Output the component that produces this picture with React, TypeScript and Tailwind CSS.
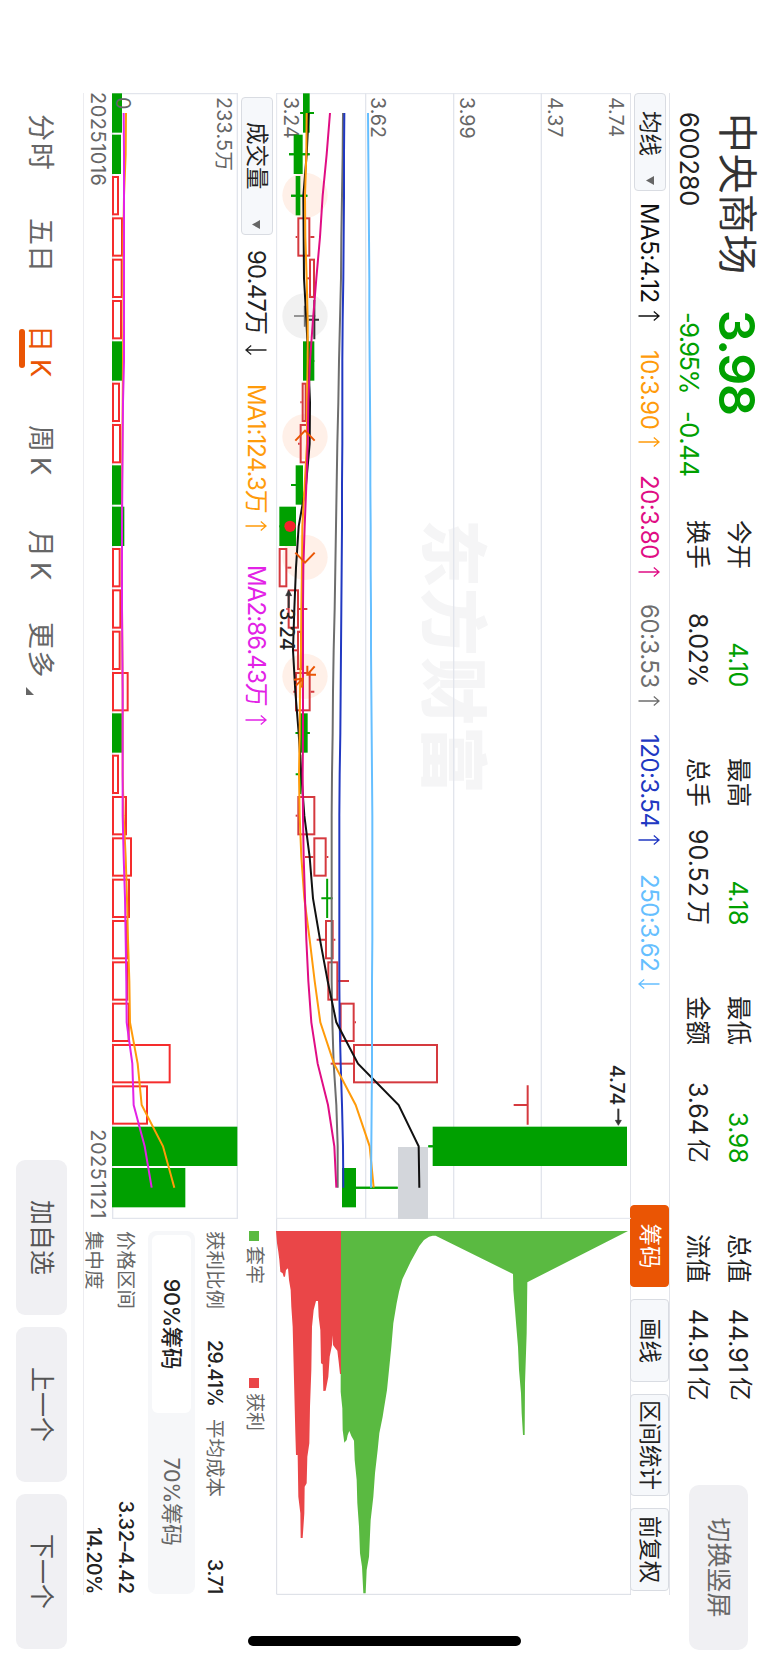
import type { ReactNode } from 'react'
import clsx from 'clsx'

// Charts are drawn in a 3x unit space: 3 units = 1 css pixel
const STEP = 124
const HALF = 59

type Kind = 'up' | 'down' | 'flat'
// [kind, body low, body high, wick low, wick high]
type Candle = [Kind, number, number, number, number]

const candles: Candle[] = [
  ['down', 81, 101, 73, 114],
  ['down', 53, 80, 39, 101],
  ['down', 59, 73, 45, 94],
  ['up', 64, 103, 59, 115],
  ['up', 99, 117, 92, 117],
  ['flat', 114, 116, 98, 129],
  ['down', 81, 115, 81, 115],
  ['up', 77, 92, 73, 92],
  ['up', 71, 97, 66, 97],
  ['down', 59, 81, 45, 81],
  ['down', 10, 60, 10, 60],
  ['up', 8, 34, 8, 46],
  ['up', 35, 69, 31, 94],
  ['up', 63, 78, 52, 78],
  ['up', 57, 104, 52, 115],
  ['down', 69, 95, 59, 101],
  ['down', 70, 76, 59, 76],
  ['up', 64, 118, 59, 118],
  ['up', 112, 152, 87, 157],
  ['down', 150, 157, 136, 170],
  ['up', 147, 173, 122, 178],
  ['up', 154, 187, 154, 219],
  ['up', 191, 236, 191, 240],
  ['up', 231, 486, 164, 486],
  ['up', 753, 757, 713, 755],
  ['down', 470, 1053, 457, 1053],
  ['down', 198, 240, 198, 365],
]

const priceLines = [
  { color: '#6e6e6e', data: [201, 200, 198, 196, 195, 192, 189, 187, 184, 182, 180, 178, 176, 173, 171, 170, 168, 167, 167, 167, 167, 167, 169, 173, 181, 185, 185] },
  { color: '#2138c2', data: [205, 204, 204, 203, 202, 200, 199, 199, 199, 198, 198, 197, 196, 195, 194, 193, 191, 190, 190, 190, 190, 190, 191, 194, 198, 201, 202] },
  { color: '#111111', data: [98, 92, 82, 83, 84, 91, 97, 102, 101, 90, 68, 60, 55, 51, 58, 68, 76, 85, 101, 111, 132, 155, 181, 246, 368, 428, 430] },
  { color: '#ff9b0a', data: [92, 91, 87, 88, 92, 95, 95, 93, 93, 86, 79, 78, 76, 75, 72, 71, 69, 71, 76, 85, 101, 116, 133, 174, 239, 281, 293] },
  { color: '#e00d84', data: [162, 152, 140, 132, 121, 111, 102, 97, 95, 91, 86, 82, 81, 81, 81, 81, 80, 81, 83, 87, 91, 97, 106, 125, 156, 175, 181] },
  { color: '#66bfff', data: [276, 277, 278, 279, 280, 280, 281, 282, 283, 283, 284, 284, 285, 285, 286, 287, 288, 289, 289, 289, 289, 288, 288, 288, 287, 286, 285] },
]

const volumes: [Kind, number][] = [
  ['down', 30], ['down', 27], ['up', 20], ['up', 32], ['up', 31], ['up', 29],
  ['down', 30], ['up', 23], ['up', 26], ['down', 27], ['down', 37], ['up', 25],
  ['up', 27], ['up', 25], ['up', 49], ['down', 30], ['up', 20], ['up', 44],
  ['up', 59], ['up', 53], ['up', 47], ['up', 48], ['up', 52], ['up', 175],
  ['up', 107], ['down', 376], ['down', 220],
]

const volumeLines = [
  { color: '#ff9b0a', data: [42, 41, 36, 34, 34, 34, 33, 32, 31, 30, 30, 30, 30, 31, 32, 32, 32, 35, 41, 45, 48, 52, 54, 77, 89, 153, 187] },
  { color: '#e222e6', data: [35, 36, 36, 36, 36, 36, 36, 33, 32, 31, 30, 30, 30, 31, 32, 32, 32, 32, 35, 39, 41, 43, 44, 61, 65, 98, 119] },
]

// [height on the price axis, amount]
const profitChips: [number, number][] = [
  [0, 0], [3, 37], [7, 62], [10, 87], [13, 122], [20, 127], [23, 137], [27, 137], [30, 117], [36, 112],
  [39, 147], [44, 177], [46, 227], [50, 287], [54, 447], [58, 607], [60, 672], [65, 672], [67, 797], [73, 847],
  [74, 921], [80, 921], [85, 847], [86, 767], [92, 757], [94, 677], [100, 637], [102, 527], [106, 417],
  [108, 287], [113, 237], [120, 210], [126, 210], [128, 257], [133, 297], [135, 397], [140, 400], [142, 480],
  [149, 479], [157, 437], [161, 377], [168, 342], [169, 313], [171, 342], [178, 352], [184, 359],
  [188, 392], [192, 429], [195, 429], [195, 0],
]
const lockedChips: [number, number][] = [
  [194, 0], [194, 482], [199, 532], [200, 597], [205, 635], [212, 627], [215, 612], [220, 600], [226, 615],
  [234, 629], [236, 687], [242, 747], [244, 817], [249, 887], [252, 967], [258, 1007], [262, 1087],
  [269, 1087], [272, 1017], [279, 977], [284, 867], [292, 797], [297, 727], [305, 657], [310, 607],
  [320, 557], [324, 532], [333, 477], [340, 407], [346, 347], [352, 277], [362, 217], [369, 182],
  [379, 145], [404, 92], [430, 45], [444, 27], [459, 17], [470, 14], [479, 14], [711, 129], [712, 177],
  [717, 237], [721, 287], [726, 347], [729, 417], [735, 487], [737, 547], [741, 612], [746, 612],
  [747, 457], [752, 307], [754, 154], [761, 150], [1056, 0],
]

const cx = (i: number) => 60 + i * STEP
const linePoints = (data: number[], h: number) => data.map((v, i) => `${cx(i)},${h - v}`).join(' ')

const mas = [
  { label: 'MA5:4.12', up: true, cls: 'w-[147px] text-[#111111]' },
  { label: '10:3.90', up: true, cls: 'w-[125px] text-[#ff9b0a]' },
  { label: '20:3.80', up: true, cls: 'w-[129px] text-[#e00d84]' },
  { label: '60:3.53', up: true, cls: 'w-[130px] text-[#6e6e6e]' },
  { label: '120:3.54', up: true, cls: 'w-[140px] text-[#2138c2]' },
  { label: '250:3.62', up: false, cls: 'w-[140px] text-[#66bfff]' },
]

const quotes = [
  { a: '今开', av: '4.10', green: true, b: '换手', bv: '8.02', unit: '%' },
  { a: '最高', av: '4.18', green: true, b: '总手', bv: '90.52', unit: '万' },
  { a: '最低', av: '3.98', green: true, b: '金额', bv: '3.64', unit: '亿' },
  { a: '总值', av: '44.91', green: false, b: '流值', bv: '44.91', unit: '亿' },
]

function Arrow({ up = true }: { up?: boolean }) {
  return (
    <svg width="10" height="22" viewBox="0 0 10 22" className={clsx('-mt-px shrink-0', !up && 'rotate-180')} fill="none" stroke="currentColor">
      <path d="M5 21.5V1M0.6 6.2L5 0.9L9.4 6.2" strokeWidth="1.3" />
    </svg>
  )
}

function Caret() {
  return (
    <svg width="9" height="8" viewBox="0 0 9 8" className="shrink-0">
      <path d="M0 0h9L4.5 8z" fill="#666" />
    </svg>
  )
}

function ToolButton({ children, className }: { children: ReactNode; className: string }) {
  return (
    <div className={clsx('flex h-[39px] shrink-0 items-center justify-center rounded-[4px] border text-[22.5px] leading-none', className)}>
      {children}
    </div>
  )
}

function Header() {
  return (
    <header className="flex h-[98px] shrink-0 pl-[113px]">
      <div className="w-[406px] shrink-0 pt-[4px]">
        <div className="flex h-[54px] items-center">
          <span className="w-[197px] text-[40px] leading-none tracking-[0.4px] text-[#333]">中央商场</span>
          <span className="text-[50px] leading-none font-semibold tracking-[-1.4px] text-[#00a000]">3.98</span>
        </div>
        <div className="flex h-[42px] items-center text-[25.5px] leading-none">
          <span className="-ml-px w-[200px] tracking-[-0.2px] text-[#222]">600280</span>
          <span className="w-[99px] tracking-[-1.6px] text-[#00a000]">-9.95%</span>
          <span className="tracking-[-0.4px] text-[#00a000]">-0.44</span>
        </div>
      </div>
      <div className="flex gap-[71px] pt-[9px] pl-px">
        {quotes.map((q) => (
          <div key={q.a} className="w-[167px] text-[25px] leading-none text-[#222]">
            <div className="flex h-[41px] items-center justify-between">
              <span className="text-[24.5px]">{q.a}</span>
              <span className={clsx('flex gap-[4px] pt-[2px]', q.green ? 'tracking-[-0.4px] text-[#00a000]' : 'tracking-normal')}>
                {q.av}
                {!q.green && <span className="-mt-[2px] text-[24px]">亿</span>}
              </span>
            </div>
            <div className="flex h-[40px] items-center justify-between">
              <span className="text-[24.5px]">{q.b}</span>
              {q.unit === '%' ? (
                <span className="tracking-[-0.6px]">{q.bv}%</span>
              ) : (
                <span className="flex gap-[4px] tracking-normal">
                  {q.bv}
                  <span className="text-[24px]">{q.unit}</span>
                </span>
              )}
            </div>
          </div>
        ))}
      </div>
      <div className="mt-[20px] ml-[84px] flex h-[59px] w-[165px] items-center justify-center rounded-[10px] bg-[#f0f0f3] text-[25px] leading-none text-[#666]">
        切换竖屏
      </div>
    </header>
  )
}

function Toolbar() {
  return (
    <div className="ml-[93px] flex h-[40px] w-[1502px] shrink-0 items-center border-y border-[#e2e4ea]">
      <div className="flex h-[32px] w-[98px] shrink-0 items-center justify-between rounded-[4px] border border-[#d9dce2] bg-[#f6f8fb] pr-[5px] pl-[17px] text-[22.5px] leading-none text-[#222]">
        均线 <Caret />
      </div>
      <div className="flex w-[1014px] items-center pt-[2px] pl-[12px] text-[24px] leading-none tracking-[-0.5px]">
        {mas.map((m) => (
          <span key={m.label} className={clsx('flex shrink-0 items-center gap-[8px]', m.cls)}>
            {m.label}
            <Arrow up={m.up} />
          </span>
        ))}
      </div>
      <div className="flex gap-[12px] text-[#222]">
        <ToolButton className="w-[82px] border-[#ea5504] bg-[#ea5504] text-white">筹码</ToolButton>
        <ToolButton className="w-[83px] border-[#d9dce2] bg-[#f6f8fb]">画线</ToolButton>
        <ToolButton className="w-[102px] border-[#d9dce2] bg-[#f6f8fb]">区间统计</ToolButton>
        <ToolButton className="w-[83px] border-[#d9dce2] bg-[#f6f8fb]">前复权</ToolButton>
      </div>
    </div>
  )
}

function PriceChart() {
  const H = 1065
  return (
    <svg width="1126" height="355" viewBox="0 0 3378 1065" className="block shrink-0">
      <text x="1278" y="608" fontSize="204" fontWeight="900" letterSpacing="3" fill="#f5f5f6">东方财富</text>
      <g stroke="#e2e5ec" strokeWidth="4">
        <path d="M0 269H3378M0 532H3378M0 796H3378" />
        <path d="M2 0V1065M3376 0V1065M0 1063H3378" strokeWidth="3" />
      </g>
      <rect x="3162" y={H - 456} width="216" height="90" fill="#d3d6db" />

      <g fontSize="59" fill="#666">
        <text x="12" y="65">4.74</text>
        <text x="12" y="248">4.37</text>
        <text x="12" y="514">3.99</text>
        <text x="12" y="779">3.62</text>
        <text x="12" y="1042">3.24</text>
      </g>

      <g fill="#fff0e8">
        <circle cx="307" cy={H - 87} r="68" />
        <circle cx="1031" cy={H - 87} r="68" />
        <circle cx="1393" cy={H - 87} r="68" />
        <circle cx="1750" cy={H - 87} r="68" />
      </g>
      <circle cx="669" cy={H - 87} r="68" fill="#f1f1f1" />
      <path d={`M669 ${H - 54}V${H - 118}M638 ${H - 86}H701`} stroke="#777" strokeWidth="5" />

      {candles.map(([kind, lo, hi, wlo, whi], i) => {
        const color = kind === 'up' ? '#d53a3f' : kind === 'down' ? '#00a000' : '#333333'
        const x = cx(i)
        if (hi - lo <= 8) {
          return (
            <g key={i} stroke={color} strokeWidth="6">
              <path d={`M${x - HALF} ${H - (lo + hi) / 2}h${HALF * 2}M${x} ${H - wlo}V${H - whi}`} />
            </g>
          )
        }
        return (
          <g key={i}>
            <path d={`M${x} ${H - wlo}V${H - lo}M${x} ${H - hi}V${H - whi}`} stroke={color} strokeWidth="6" />
            {kind === 'up' ? (
              <rect x={x - HALF + 3} y={H - hi + 3} width={HALF * 2 - 6} height={hi - lo - 6} fill="none" stroke={color} strokeWidth="6" />
            ) : (
              <rect x={x - HALF} y={H - hi} width={HALF * 2} height={hi - lo} fill={color} />
            )}
            {kind === 'down' && <path d={`M${x} ${H - wlo}V${H - whi}`} stroke={color} strokeWidth="6" />}
          </g>
        )
      })}
      {priceLines.map((l) => (
        <polyline key={l.color} points={linePoints(l.data, H)} fill="none" stroke={l.color} strokeWidth="6" />
      ))}

      <circle cx="1300" cy={H - 42} r="17" fill="#f5222d" />
      <g stroke="#ea5504" strokeWidth="6" fill="none">
        <path d={`M1043 ${H - 58}L1013 ${H - 87}L1043 ${H - 116}`} />
        <path d={`M1379 ${H - 58}L1409 ${H - 87}L1379 ${H - 116}`} />
        <path d={`M1720 ${H - 116}L1745 ${H - 94}M1718 ${H - 94}H1745V${H - 120}`} />
        <path d={`M1778 ${H - 60}L1757 ${H - 80}M1784 ${H - 78}L1757 ${H - 80}L1760 ${H - 54}`} />
      </g>

      <g fill="#222" fontSize="59" fontWeight="500">
        <text x="2915" y="62">4.74</text>
        <text x="1545" y="1053">3.24</text>
      </g>
      <g stroke="#333" strokeWidth="6" fill="#333">
        <path d="M3047 38H3084" />
        <path d="M3082 29L3097 38L3082 47z" strokeWidth="2" />
        <path d="M1545 1027H1508" />
        <path d="M1508 1018L1491 1027L1508 1036z" strokeWidth="2" />
      </g>
    </svg>
  )
}

function VolumeChart() {
  const H = 378
  return (
    <svg width="1126" height="126" viewBox="0 0 3378 378" className="block shrink-0">
      <path d="M0 2H3378M2 0V378M3376 0V378M0 376H3378" stroke="#e2e5ec" strokeWidth="4" />
      {volumes.map(([kind, v], i) =>
        kind === 'up' ? (
          <rect key={i} x={cx(i) - HALF + 3} y={H - v + 2} width={HALF * 2 - 6} height={v - 5} fill="none" stroke="#f52d2d" strokeWidth="6" />
        ) : (
          <rect key={i} x={cx(i) - HALF} y={H - v} width={HALF * 2} height={v} fill="#00a000" />
        ),
      )}
      <g fontSize="59" fill="#666">
        <text x="12" y="62" letterSpacing="0.6">233.5万</text>
        <text x="12" y="365">0</text>
      </g>
      {volumeLines.map((l) => (
        <polyline key={l.color} points={linePoints(l.data, H)} fill="none" stroke={l.color} strokeWidth="6" />
      ))}
    </svg>
  )
}

function VolumeBar() {
  return (
    <div className="flex h-[38px] shrink-0 items-center pt-[2px] pl-[4px] text-[24px] leading-none tracking-[-0.9px]">
      <div className="-mt-[2px] flex h-[32px] w-[138px] shrink-0 items-center justify-between rounded-[4px] border border-[#d9dce2] bg-[#f6f8fb] pt-px pr-[5px] pl-[24px] text-[22.5px] tracking-normal text-[#222]">
        成交量 <Caret />
      </div>
      <span className="flex w-[149px] items-center gap-[11px] pl-[15px] text-[#222]">90.47万 <Arrow up={false} /></span>
      <span className="flex w-[181px] items-center gap-[8px] text-[#ff9b0a]">MA1:124.3万 <Arrow /></span>
      <span className="flex items-center gap-[9px] text-[#e222e6]">MA2:86.43万 <Arrow /></span>
    </div>
  )
}

function ChipPanel() {
  const H = 1065
  const toPoints = (pts: [number, number][]) => pts.map(([h, a]) => `${36 + a},${H - h}`).join(' ')
  return (
    <div className="flex w-[376px] shrink-0 flex-col">
      <svg width="376" height="355" viewBox="0 0 1128 1065" className="block shrink-0">
        <path d="M0 1063H1126V0" fill="none" stroke="#d9dce4" strokeWidth="3" />
        <polygon points={toPoints(lockedChips)} fill="#5aba41" />
        <polygon points={toPoints(profitChips)} fill="#ea4648" />
      </svg>
      <div className="flex h-[42px] shrink-0 items-center pt-px pl-[12px] text-[19px] leading-none text-[#666]">
        <span className="flex w-[147px] items-center gap-[5px]"><i className="size-[10px] bg-[#5aba41]" />套牢</span>
        <span className="flex items-center gap-[5px]"><i className="size-[10px] bg-[#ea4648]" />获利</span>
      </div>
      <div className="ml-[12px] flex w-[363px] flex-col text-[19.5px] leading-none text-[#666]">
        <div className="flex h-[39px] items-center">
          <span className="w-[109px]">获利比例</span>
          <span className="w-[79px] font-medium tracking-[-0.5px] text-[#222]">29.41%</span>
          <span>平均成本</span>
          <span className="ml-auto font-medium tracking-[-0.4px] text-[#222]">3.71</span>
        </div>
        <div className="flex h-[47px] rounded-[8px] bg-[#f6f7f9] p-[4px] text-[21.5px] tracking-[-0.3px]">
          <div className="flex w-[178px] items-center justify-center rounded-[6px] bg-white font-medium text-[#222]">90%筹码</div>
          <div className="flex flex-1 items-center justify-center">70%筹码</div>
        </div>
        <div className="flex h-[46px] items-center justify-between">
          <span>价格区间</span>
          <span className="font-medium tracking-[-0.1px] text-[#222]">3.32–4.42</span>
        </div>
        <div className="flex h-[17px] items-center justify-between">
          <span>集中度</span>
          <span className="font-medium tracking-[-0.5px] text-[#222]">14.20%</span>
        </div>
      </div>
    </div>
  )
}

function Footer() {
  return (
    <footer className="flex shrink-0 pt-[15px] pl-[114px] text-[27px] leading-none text-[#666]">
      <div className="flex h-[53px] w-[1046px] items-center pt-px">
        <span className="w-[104px] tracking-[1.8px]">分时</span>
        <span className="w-[107px]">五日</span>
        <span className="relative flex w-[100px] gap-[7px] text-[#ea5504]">
          日<span>K</span>
          <i className="absolute -bottom-[8px] left-[4px] h-[6px] w-[39px] rounded-full bg-[#ea5504]" />
        </span>
        <span className="flex w-[105px] gap-[5px]">周<span>K</span></span>
        <span className="flex w-[92px] gap-[5px]">月<span>K</span></span>
        <span className="tracking-[1.5px]">更多</span>
        <svg width="8" height="8" viewBox="0 0 8 8" className="mt-[21px] ml-[8px]">
          <path d="M8 0V8H0z" fill="#666" />
        </svg>
      </div>
      <div className="flex gap-[12px] pt-[1px] text-[25px]">
        {['加自选', '上一个', '下一个'].map((t) => (
          <div key={t} className="flex h-[51px] w-[155px] items-center justify-center rounded-[9px] bg-[#f0f0f3] text-[#555]">
            {t}
          </div>
        ))}
      </div>
    </footer>
  )
}

export default function App() {
  return (
    <div className="h-[1663px] w-[768px] overflow-hidden bg-white">
      {/* landscape screen turned clockwise into the portrait window */}
      <div className="relative flex h-[768px] w-[1663px] origin-top-left translate-x-[768px] rotate-90 flex-col bg-white font-['Inter','Noto_Sans_CJK_SC',sans-serif] whitespace-nowrap">
        <Header />
        <Toolbar />
        <div className="-mt-px ml-[93px] flex h-[548px] w-[1502px] shrink-0 border-b border-[#ececf0]">
          <div className="flex w-[1126px] shrink-0 flex-col">
            <PriceChart />
            <VolumeBar />
            <VolumeChart />
            <div className="-ml-px flex h-[27px] items-center justify-between text-[20px] leading-none tracking-[0.5px] text-[#666]">
              <span>20251016</span>
              <span>20251121</span>
            </div>
          </div>
          <ChipPanel />
        </div>
        <Footer />
        <div className="absolute top-[247px] right-[17px] h-[273px] w-[10px] rounded-full bg-black" />
      </div>
    </div>
  )
}
